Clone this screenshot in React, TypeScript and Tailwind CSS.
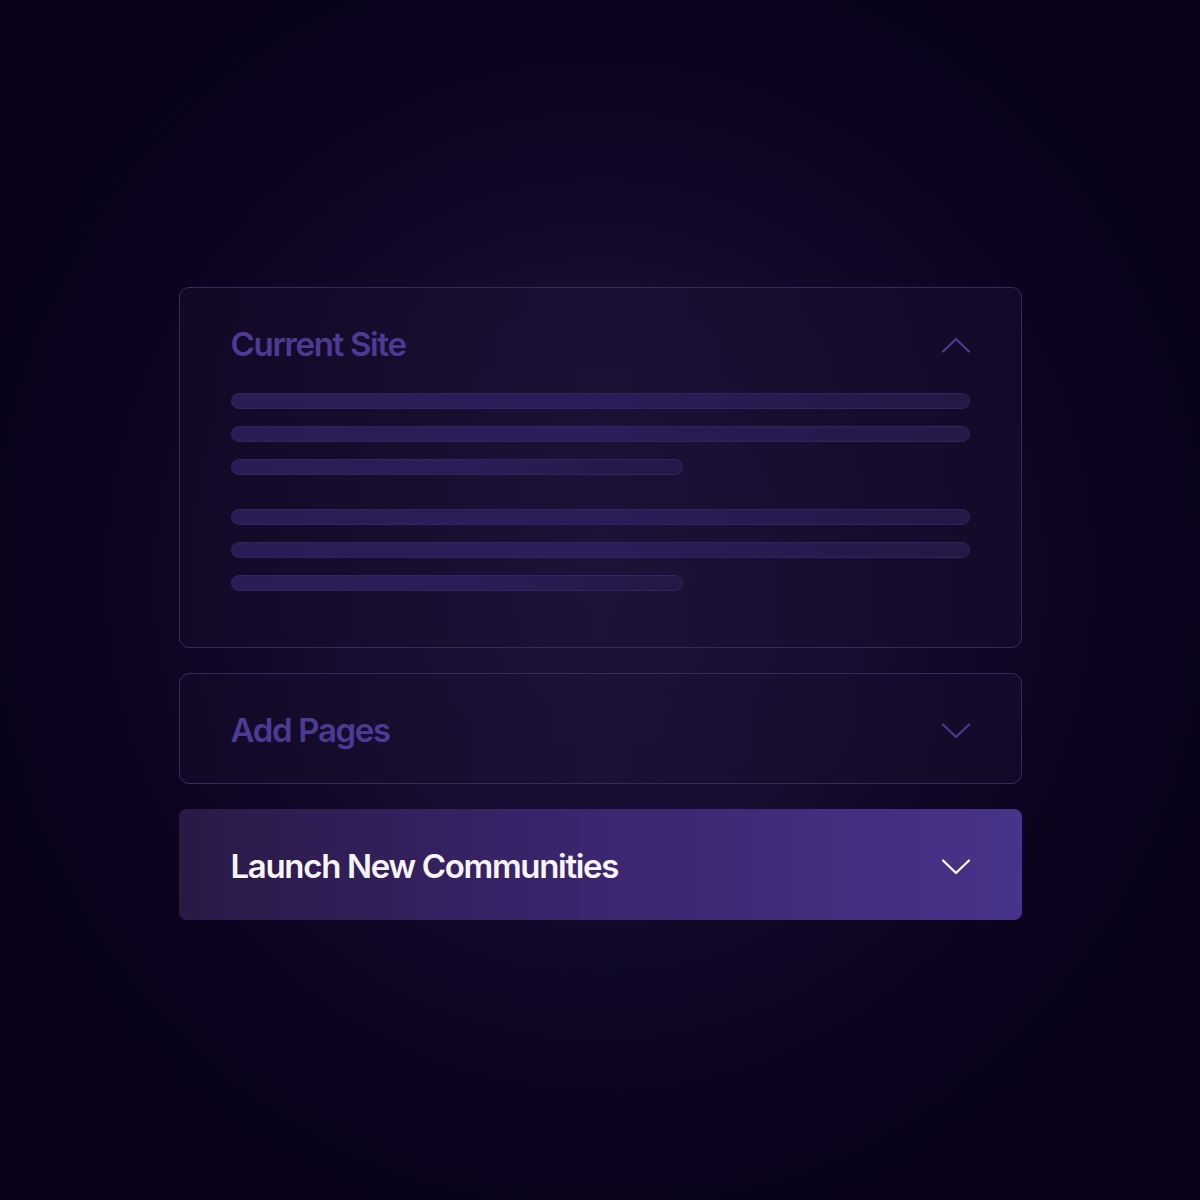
import React from "react";

function Chevron({ up, className }: { up?: boolean; className?: string }) {
  return (
    <svg width="30" height="16" viewBox="0 0 30 16" fill="none" className={className}>
      <path
        d={up ? "M2 14.5 L15 2 L28 14.5" : "M2 1.5 L15 14 L28 1.5"}
        stroke="currentColor"
        strokeWidth="2.2"
        strokeLinecap="round"
        strokeLinejoin="round"
      />
    </svg>
  );
}

function Bar({ short }: { short?: boolean }) {
  return (
    <div
      className={`h-4 rounded-full border border-[#32245e] bg-gradient-to-r from-[#2a1c54] via-[#2b1d58] to-[#231846] ${
        short ? "w-[452px]" : "w-full"
      }`}
    />
  );
}

export default function App() {
  return (
    <div
      className="w-[1200px] h-[1200px] flex items-start justify-center pt-[287px] bg-[radial-gradient(ellipse_at_50%_48%,#1e143b_0%,#160d30_30%,#0c0420_56%,#09021a_80%)]"
      style={{ fontFamily: "Inter, 'Liberation Sans', sans-serif" }}
    >
      <div className="w-[843px] flex flex-col gap-[25px]">
        <div className="h-[361px] rounded-[10px] border border-[#372b55] bg-gradient-to-r from-[#130a28]/80 via-[#1c1236]/60 to-[#140b2a]/80 px-[51px] pt-[38px]">
          <div className="flex items-center justify-between h-[38px]">
            <span className="text-[33px] font-semibold tracking-[-0.04em] text-[#4d3a94]">
              Current Site
            </span>
            <Chevron up className="text-[#4d3a94] mr-[-1px]" />
          </div>
          <div className="mt-[29px] flex flex-col gap-[17px]">
            <Bar />
            <Bar />
            <Bar short />
          </div>
          <div className="mt-[34px] flex flex-col gap-[17px]">
            <Bar />
            <Bar />
            <Bar short />
          </div>
        </div>
        <div className="h-[111px] rounded-[10px] border border-[#372b55] bg-gradient-to-r from-[#130a28]/80 via-[#1c1236]/60 to-[#140b2a]/80 px-[51px] pt-1 flex items-center justify-between">
          <span className="text-[33px] font-semibold tracking-[-0.04em] text-[#4d3a94]">
            Add Pages
          </span>
          <Chevron className="text-[#4d3a94] mr-[-1px]" />
        </div>
        <div className="h-[111px] rounded-[8px] bg-gradient-to-r from-[#2a1946] via-[#3b2670] to-[#48338b] px-[52px] pt-1 flex items-center justify-between">
          <span className="text-[33px] font-semibold tracking-[-0.04em] text-[#f8f4ff]">
            Launch New Communities
          </span>
          <Chevron className="text-white mr-[-1px]" />
        </div>
      </div>
    </div>
  );
}
